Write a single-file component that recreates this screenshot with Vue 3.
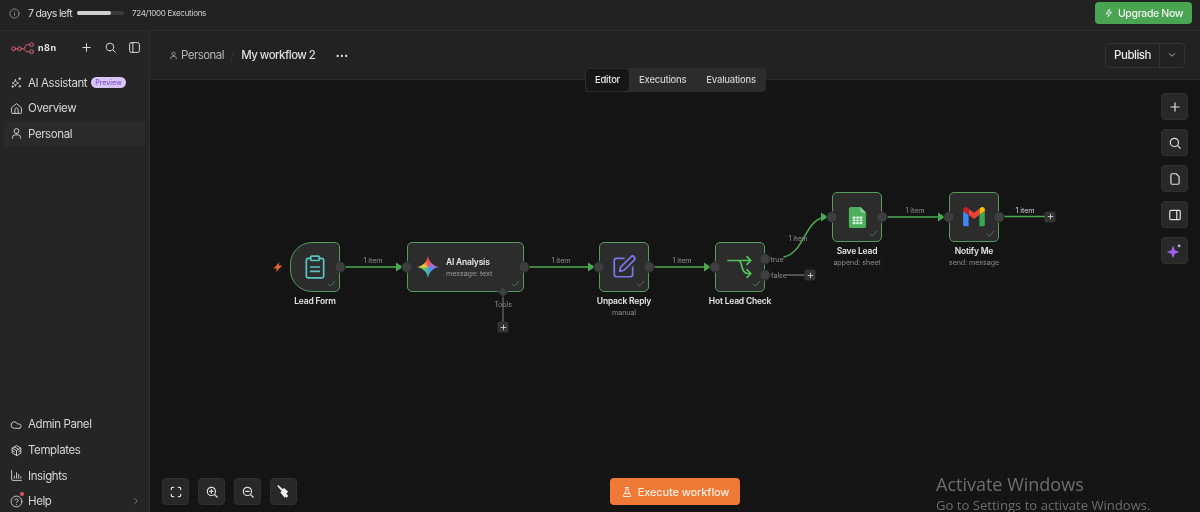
<script setup>
const nav = [
  { label: 'Overview', icon: 'M3 10.5 12 3l9 7.5V20a1 1 0 0 1-1 1H4a1 1 0 0 1-1-1zM9 21v-7a3 3 0 0 1 6 0v7' },
  { label: 'Personal', icon: 'M12 12a4.5 4.5 0 1 0 0-9 4.5 4.5 0 0 0 0 9zM4.5 21v-1.500a5 5 0 0 1 5-5h5a5 5 0 0 1 5 5V21', active: true }
]
const bottomNav = [
  { label: 'Admin Panel', icon: 'M17.500 19H8a6 6 0 1 1 5.700-7.900h1.800a4 4 0 0 1 2 7.900z' },
  { label: 'Templates', icon: 'M12 21 4 16.500v-9L12 3l8 4.500v9zM4 7.500l8 4.500 8-4.500M12 12v9M8 5.200l8 4.500M4 12l4 2.500M20 12l-4 2.500' },
  { label: 'Insights', icon: 'M3 3v16a2 2 0 0 0 2 2h16M8 17v-4M12 17V7M16 17v-7M20 17v-3' }
]
const nodes = [
  { id: 'form', name: 'Lead Form', x: 290, y: 242, w: 50, trigger: true },
  { id: 'ai', name: 'AI Analysis', sub: 'message: text', x: 407, y: 242, w: 117, inline: true },
  { id: 'edit', name: 'Unpack Reply', sub: 'manual', x: 599, y: 242, w: 50 },
  { id: 'if', name: 'Hot Lead Check', x: 715, y: 242, w: 50 },
  { id: 'sheet', name: 'Save Lead', sub: 'append: sheet', x: 832, y: 192, w: 50 },
  { id: 'gmail', name: 'Notify Me', sub: 'send: message', x: 949, y: 192, w: 50 }
]
const edgeLabels = [
  { text: '1 item', x: 373, y: 260 },
  { text: '1 item', x: 561, y: 260 },
  { text: '1 item', x: 682, y: 260 },
  { text: '1 item', x: 798, y: 238 },
  { text: '1 item', x: 915, y: 210 },
  { text: '1 item', x: 1025, y: 210, bright: true },
  { text: 'true', x: 777, y: 259 },
  { text: 'false', x: 779, y: 275 },
  { text: 'Tools', x: 503, y: 304 }
]
const handles = [
  [340, 267], [407, 267], [524, 267], [599, 267], [649, 267], [715, 267],
  [765, 259], [765, 275], [832, 217], [882, 217], [949, 217], [999, 217]
]
const arrows = [
  'M345 267H399', 'M529 267H594', 'M654 267H711', 'M887 217H944', 'M1004 216.500H1045'
]
const arrowHeads = [
  [403, 267], [595, 267], [711, 267], [828, 217], [945, 217]
]
const plusButtons = [[503, 327], [810, 275], [1050, 216.500]]
const sideTools = [
  { id: 'plus', d: 'M12 5v14M5 12h14' },
  { id: 'search', d: 'M11 18a7 7 0 1 0 0-14 7 7 0 0 0 0 14zM21 21l-4.500-4.500' },
  { id: 'note', d: 'M5 5a2 2 0 0 1 2-2h7l5 5v11a2 2 0 0 1-2 2H7a2 2 0 0 1-2-2z' },
  { id: 'panel', d: 'M5 4h14a2 2 0 0 1 2 2v12a2 2 0 0 1-2 2H5a2 2 0 0 1-2-2V6a2 2 0 0 1 2-2zM15 4v16' }
]
const zoomTools = [
  'M4 8V6a2 2 0 0 1 2-2h2M16 4h2a2 2 0 0 1 2 2v2M20 16v2a2 2 0 0 1-2 2h-2M8 20H6a2 2 0 0 1-2-2v-2',
  'M11 18a7 7 0 1 0 0-14 7 7 0 0 0 0 14zM21 21l-4.500-4.500M11 8v6M8 11h6',
  'M11 18a7 7 0 1 0 0-14 7 7 0 0 0 0 14zM21 21l-4.500-4.500M8 11h6'
]
</script>

<template>
  <div class="app">
    <header class="banner">
      <svg class="info" viewBox="0 0 24 24"><circle cx="12" cy="12" r="10" /><path d="M12 16v-4M12 8h.01" /></svg>
      <span class="days">7 days left</span>
      <span class="track"><span class="fill" /></span>
      <span class="execs">724/1000 Executions</span>
      <button class="upgrade">
        <svg viewBox="0 0 24 24"><path d="M13 3 5 14h6l-1 7 8-11h-6z" /></svg>
        Upgrade Now
      </button>
    </header>

    <div class="body">
      <aside class="sidebar">
        <div class="brand">
          <svg class="logo" viewBox="0 0 32 16">
            <circle cx="3.500" cy="9" r="2.500" />
            <circle cx="11.500" cy="9" r="2.500" />
            <circle cx="27.500" cy="3.500" r="2.500" />
            <circle cx="27.500" cy="13" r="2.500" />
            <path d="M6 9h3M14 9h3c2 0 1.500-5.500 4-5.500h4M17 9c2 0 1.500 4 4 4h4" />
          </svg>
          <span class="brand-name">n8n</span>
          <svg class="brand-icon first" viewBox="0 0 24 24"><path d="M12 5v14M5 12h14" /></svg>
          <svg class="brand-icon" viewBox="0 0 24 24"><path d="M11 18a7 7 0 1 0 0-14 7 7 0 0 0 0 14zM21 21l-4.500-4.500" /></svg>
          <svg class="brand-icon" viewBox="0 0 24 24"><rect x="3" y="3" width="18" height="18" rx="3" /><path d="M9 3v18" /></svg>
        </div>

        <a class="nav-item">
          <svg viewBox="0 0 24 24"><path d="M10 7c.8 4 2 5.200 6 6-4 .8-5.200 2-6 6-.8-4-2-5.200-6-6 4-.8 5.200-2 6-6zM18 3v4M16 5h4M5 18v3M3.500 19.500h3" /><circle cx="18" cy="19" r="1.500" /></svg>
          AI Assistant
          <span class="preview">Preview</span>
        </a>
        <a v-for="item in nav" :key="item.label" class="nav-item" :class="{ active: item.active }">
          <svg viewBox="0 0 24 24"><path :d="item.icon" /></svg>
          {{ item.label }}
        </a>

        <div class="spacer" />

        <a v-for="item in bottomNav" :key="item.label" class="nav-item">
          <svg viewBox="0 0 24 24"><path :d="item.icon" /></svg>
          {{ item.label }}
        </a>
        <a class="nav-item help">
          <span class="help-icon">
            <svg viewBox="0 0 24 24"><circle cx="12" cy="12" r="10" /><path d="M9 9a3 3 0 0 1 5.800 1c0 2-2.800 2.500-2.800 4M12 17.500h.01" /></svg>
            <i class="dot" />
          </span>
          Help
          <svg class="chev" viewBox="0 0 24 24"><path d="m9 6 6 6-6 6" /></svg>
        </a>
      </aside>

      <main class="main">
        <div class="topbar">
          <div class="crumbs">
            <svg viewBox="0 0 24 24"><path d="M12 12a4.500 4.500 0 1 0 0-9 4.500 4.500 0 0 0 0 9zM4.500 21v-1.500a5 5 0 0 1 5-5h5a5 5 0 0 1 5 5V21" /></svg>
            <span class="crumb">Personal</span>
            <span class="slash">/</span>
            <span class="title">My workflow 2</span>
            <span class="more">···</span>
          </div>
          <div class="publish">
            <span class="publish-label">Publish</span>
            <span class="publish-arrow">
              <svg viewBox="0 0 24 24"><path d="m6 9 6 6 6-6" /></svg>
            </span>
          </div>
        </div>

        <div class="tabs">
          <span class="tab on">Editor</span>
          <span class="tab">Executions</span>
          <span class="tab">Evaluations</span>
        </div>

        <section class="canvas">
          <svg class="edges" viewBox="150 80 1050 432">
            <path v-for="d in arrows" :key="d" :d="d" class="edge" />
            <path d="M784 257C806 252 804 217 828 217" class="edge" />
            <path d="M787 275H805" class="grey" />
            <path d="M503 297V322" class="grey" />
            <path v-for="a in arrowHeads" :key="a[0]" :d="`M${a[0]} ${a[1]}l-7-4.500v9z`" class="head" />
            <path d="M273.500 268.500 279.500 262l-.8 3.500h3.500L276 272l.8-3.500z" fill="#e8672f" />
          </svg>

          <span
            v-for="l in edgeLabels"
            :key="l.text + l.x"
            class="edge-label"
            :class="{ bright: l.bright }"
            :style="{ left: l.x - 150 + 'px', top: l.y - 80 + 'px' }"
          >{{ l.text }}</span>

          <span
            v-for="p in plusButtons"
            :key="p[0]"
            class="plus"
            :style="{ left: p[0] - 150 + 'px', top: p[1] - 80 + 'px' }"
          >
            <svg viewBox="0 0 24 24"><path d="M12 5v14M5 12h14" /></svg>
          </span>

          <div
            v-for="n in nodes"
            :key="n.id"
            class="node"
            :style="{ left: n.x - 150 + 'px', top: n.y - 80 + 'px', width: n.w + 'px' }"
          >
            <div class="box" :class="{ trigger: n.trigger, wide: n.inline }">
              <svg v-if="n.id === 'form'" class="node-icon" viewBox="0 0 24 24" style="stroke:#5cc2bd">
                <rect x="8" y="2" width="8" height="4" rx="1" />
                <path d="M16 4h2a2 2 0 0 1 2 2v14a2 2 0 0 1-2 2H6a2 2 0 0 1-2-2V6a2 2 0 0 1 2-2h2M8 12h8M8 16h8" />
              </svg>
              <span v-if="n.id === 'ai'" class="gem" />
              <svg v-if="n.id === 'edit'" class="node-icon" viewBox="0 0 24 24" style="stroke:#7b78e8">
                <path d="M12 4H5a2 2 0 0 0-2 2v13a2 2 0 0 0 2 2h13a2 2 0 0 0 2-2v-7" />
                <path d="M18.400 2.600a2.100 2.100 0 0 1 3 3L12 15l-4 1 1-4z" />
              </svg>
              <svg v-if="n.id === 'if'" class="node-icon" viewBox="0 0 24 24" style="stroke:#4fc45a">
                <path d="M1 6h9c3 0 3 3 4 6.500s2 5.500 5 5.500h3M12 6h10M18.500 2.500 22 6l-3.500 3.500M18.500 14.500 22 18l-3.500 3.500" />
              </svg>
              <svg v-if="n.id === 'sheet'" class="brand-node" viewBox="0 0 24 24">
                <path d="M5 1h10l6 6v14a2 2 0 0 1-2 2H5a2 2 0 0 1-2-2V3a2 2 0 0 1 2-2z" fill="#4caf5c" />
                <path d="M15 1l6 6h-4a2 2 0 0 1-2-2z" fill="#8fd19a" />
                <path d="M7 11h10v8H7z" fill="#e8f5e9" />
                <path d="M7 13.700h10M7 16.300h10M10.300 11v8M13.700 11v8" stroke="#4caf5c" stroke-width=".9" />
              </svg>
              <svg v-if="n.id === 'gmail'" class="gmail" viewBox="0 0 24 24">
                <path d="M2 6.500V19a1.500 1.500 0 0 0 1.500 1.500H7V10z" fill="#4285f4" />
                <path d="M17 20.500h3.500A1.500 1.500 0 0 0 22 19V6.500L17 10z" fill="#34a853" />
                <path d="M17 10V4.300l1.600-1.200c1.300-1 3.400 0 3.400 1.700v1.700z" fill="#fbbc04" />
                <path d="M7 10V4.300l5 3.800 5-3.800V10l-5 3.800z" fill="#ea4335" />
                <path d="M2 6.500V4.800c0-1.700 2.100-2.700 3.400-1.700L7 4.300V10z" fill="#c5221f" />
              </svg>
              <div v-if="n.inline" class="inline-text">
                <strong>{{ n.name }}</strong>
                <small>{{ n.sub }}</small>
              </div>
              <svg class="check" viewBox="0 0 24 24"><path d="M3 13l6 6L21 6" /></svg>
            </div>
            <div v-if="!n.inline" class="caption">
              <strong>{{ n.name }}</strong>
              <small v-if="n.sub">{{ n.sub }}</small>
            </div>
          </div>

          <!-- handles sit on the node borders, so they come after the nodes -->
          <svg class="edges" viewBox="150 80 1050 432">
            <circle v-for="h in handles" :key="h[0] + '-' + h[1]" :cx="h[0]" :cy="h[1]" r="5.200" class="handle" />
            <path d="M503 287 508 292 503 297 498 292z" class="handle" />
          </svg>

          <div class="side-tools">
            <span v-for="t in sideTools" :key="t.id" class="tool">
              <svg viewBox="0 0 24 24"><path :d="t.d" /></svg>
            </span>
            <span class="tool">
              <svg class="spark" viewBox="0 0 24 24">
                <path d="M10 5l2.500 6.500L19 14l-6.500 2.500L10 23l-2.500-6.500L1 14l6.500-2.500z" />
                <circle cx="18.500" cy="5.500" r="2" fill="#c9a8f5" />
              </svg>
            </span>
          </div>

          <div class="footer-tools">
            <div class="zoom-tools">
              <span v-for="d in zoomTools" :key="d" class="tool">
                <svg viewBox="0 0 24 24"><path :d="d" /></svg>
              </span>
              <span class="tool">
                <svg class="broom" viewBox="0 0 24 24">
                  <path d="M2 3l1.500-1.500 7 6.500 2.500-1.500 6.500 6-3 2.500 3 4-2.500 3-2-1.500-1 1.500-7-8.500 2-2.500z" />
                </svg>
              </span>
            </div>
            <button class="execute">
              <svg viewBox="0 0 24 24"><path d="M9 3h6M10 3v6.500L4.500 19a1.500 1.500 0 0 0 1.300 2h12.400a1.500 1.500 0 0 0 1.300-2L14 9.500V3M7.500 15h9" /></svg>
              Execute workflow
            </button>
          </div>

          <div class="watermark">
            <div class="wm-title">Activate Windows</div>
            <div class="wm-sub">Go to Settings to activate Windows.</div>
          </div>
        </section>
      </main>
    </div>
  </div>
</template>

<style>
html,
body {
  margin: 0;
  background: #141414;
  overflow: hidden;
}
</style>

<style scoped>
.app {
  width: 1200px;
  height: 512px;
  display: flex;
  flex-direction: column;
  overflow: hidden;
  font-family: Inter, "Liberation Sans", sans-serif;
  color: #e4e4e4;
  background: #141414;
  /* the reference is a soft, recompressed screenshot */
  filter: blur(.3px);
}

svg {
  fill: none;
  stroke: currentColor;
  stroke-width: 2;
  stroke-linecap: round;
  stroke-linejoin: round;
  flex: none;
}

/* top banner */
.banner {
  height: 31px;
  flex: none;
  box-sizing: border-box;
  display: flex;
  align-items: center;
  padding: 0 8px 4px 9px;
  background: #222222;
  border-bottom: 1px solid #2c2c2c;
}

.info {
  width: 11px;
  height: 11px;
  color: #8f8f8f;
}

.days {
  margin-left: 8px;
  font-size: 10.500px;
  letter-spacing: -.65px;
  color: #dcdcdc;
}

.track {
  margin-left: 5px;
  width: 47px;
  height: 4px;
  border-radius: 2px;
  background: #3a3a3a;
}

.fill {
  display: block;
  width: 34px;
  height: 4px;
  border-radius: 2px;
  background: #d0d0d0;
}

.execs {
  margin-left: 8px;
  font-size: 8px;
  letter-spacing: -.27px;
  color: #cfcfcf;
}

.upgrade {
  margin-left: auto;
  width: 97px;
  height: 22px;
  display: flex;
  align-items: center;
  justify-content: center;
  gap: 4px;
  border: none;
  border-radius: 4px;
  background: #4aa552;
  color: #f2f2f2;
  font: 500 10.500px Inter, "Liberation Sans", sans-serif;
  letter-spacing: -.35px;
}

.upgrade svg {
  width: 10px;
  height: 10px;
}

.body {
  flex: 1;
  display: flex;
  min-height: 0;
}

/* sidebar */
.sidebar {
  width: 150px;
  flex: none;
  box-sizing: border-box;
  padding: 0 4px;
  display: flex;
  flex-direction: column;
  background: #252525;
  border-right: 1px solid #303030;
}

.brand {
  height: 33px;
  display: flex;
  align-items: center;
  padding: 0 4px 0 7px;
  margin-bottom: 6px;
}

.logo {
  width: 24px;
  height: 14px;
  color: #e0607a;
  stroke-width: 1.300;
}

.brand-name {
  margin-left: 3px;
  font-size: 9px;
  font-weight: 700;
  letter-spacing: .5px;
  color: #e4e4e4;
}

.brand-icon {
  width: 13px;
  height: 13px;
  margin-left: 11px;
  color: #dcdcdc;
  stroke-width: 1.800;
}

.brand-icon.first {
  margin-left: auto;
}

.nav-item {
  height: 25.600px;
  flex: none;
  display: flex;
  align-items: center;
  gap: 5px;
  padding-left: 6px;
  border-radius: 4px;
  font-size: 11.500px;
  letter-spacing: -.4px;
  color: #d6d6d6;
}

.nav-item svg {
  width: 13px;
  height: 13px;
  stroke-width: 1.700;
}

.nav-item.active {
  background: #2a2a2a;
}

.preview {
  margin-left: -1px;
  padding: 0 4px;
  height: 11px;
  line-height: 11px;
  border-radius: 6px;
  background: #d9c6f9;
  color: #8352d8;
  font-size: 7px;
  font-weight: 500;
  letter-spacing: 0;
}

.spacer {
  flex: 1;
}

.help {
  margin-bottom: -2px;
}

.help-icon {
  position: relative;
  display: flex;
}

.dot {
  position: absolute;
  top: -3px;
  right: -1px;
  width: 4px;
  height: 4px;
  border-radius: 50%;
  background: #e5545f;
}

.nav-item .chev {
  margin-left: auto;
  margin-right: 4px;
  width: 10px;
  height: 10px;
  color: #9a9a9a;
}

/* header of the editor */
.main {
  position: relative;
  flex: 1;
  display: flex;
  flex-direction: column;
  min-width: 0;
}

.topbar {
  height: 49px;
  flex: none;
  box-sizing: border-box;
  display: flex;
  align-items: center;
  justify-content: space-between;
  padding: 0 15px 0 19px;
  background: #222222;
  border-bottom: 1px solid #2b2b2b;
}

.crumbs {
  display: flex;
  align-items: center;
}

.crumbs svg {
  width: 9px;
  height: 9px;
  color: #b0b0b0;
}

.crumb {
  margin-left: 3px;
  font-size: 11.500px;
  letter-spacing: -.55px;
  color: #b5b5b5;
}

.slash {
  margin: 0 7px 0 6px;
  font-size: 12px;
  color: #383838;
}

.title {
  font-size: 11.500px;
  letter-spacing: -.55px;
  font-weight: 500;
  color: #dedede;
}

.more {
  margin-left: 20px;
  font-size: 13px;
  font-weight: 700;
  color: #dcdcdc;
}

.publish {
  width: 80px;
  height: 25px;
  display: flex;
  box-sizing: border-box;
  border: 1px solid #333333;
  border-radius: 4px;
}

.publish-label {
  flex: 1;
  display: flex;
  align-items: center;
  justify-content: center;
  font-size: 11.500px;
  letter-spacing: -.5px;
  font-weight: 500;
  color: #e8e8e8;
}

.publish-arrow {
  width: 24px;
  display: flex;
  align-items: center;
  justify-content: center;
  border-left: 1px solid #333333;
}

.publish-arrow svg {
  width: 10px;
  height: 10px;
  color: #c8c8c8;
}

.tabs {
  position: absolute;
  z-index: 3;
  left: 435px;
  top: 37px;
  width: 181px;
  height: 24px;
  box-sizing: border-box;
  display: flex;
  align-items: center;
  padding: 1px;
  border-radius: 4px;
  background: #2c2c2c;
}

.tab {
  height: 22px;
  line-height: 22px;
  padding: 0 10px;
  font-size: 9.500px;
  letter-spacing: -.25px;
  font-weight: 500;
  color: #cdcdcd;
}

.tab.on {
  padding: 0 9px;
  background: #161616;
  border-radius: 4px;
  color: #e6e6e6;
}

/* canvas */
.canvas {
  flex: 1;
  position: relative;
  overflow: hidden;
  background-color: #141414;
  background-image: radial-gradient(#191919 1px, transparent 1px);
  background-size: 8px 8px;
}

.edges {
  position: absolute;
  left: 0;
  top: 0;
  width: 1050px;
  height: 432px;
  stroke: none;
  pointer-events: none;
}

.edge {
  stroke: #4aaa52;
  stroke-width: 1.500;
  fill: none;
}

.grey {
  stroke: #666666;
  stroke-width: 1.300;
  fill: none;
}

.head {
  fill: #4aaa52;
  stroke: none;
}

.handle {
  fill: #3e3e3e;
  stroke: #2a2a2a;
  stroke-width: 1;
}

.edge-label {
  position: absolute;
  transform: translate(-50%, -50%);
  font-size: 7.200px;
  letter-spacing: -.1px;
  color: #8c8c8c;
  white-space: nowrap;
}

.edge-label.bright {
  color: #d0d0d0;
}

.plus {
  position: absolute;
  transform: translate(-50%, -50%);
  width: 11px;
  height: 11px;
  display: flex;
  align-items: center;
  justify-content: center;
  border-radius: 2px;
  background: #333333;
  color: #d8d8d8;
}

.plus svg {
  width: 8px;
  height: 8px;
  stroke-width: 2.500;
}

.node {
  position: absolute;
  display: flex;
  flex-direction: column;
  align-items: center;
}

.box {
  position: relative;
  width: 100%;
  height: 50px;
  box-sizing: border-box;
  display: flex;
  align-items: center;
  justify-content: center;
  border: 1.500px solid #579a5c;
  border-radius: 5px;
  background: #2c2c2c;
}

.box.trigger {
  border-radius: 22px 5px 5px 22px;
}

.box.wide {
  justify-content: flex-start;
  padding-left: 9px;
  gap: 7px;
}

.node-icon {
  width: 26px;
  height: 26px;
  stroke-width: 1.600;
}

.gem {
  width: 22px;
  height: 22px;
  flex: none;
  background: conic-gradient(#e8504a, #b56cd0 18%, #4b8df0 35%, #3fb8b0 55%, #5cc46a 65%, #f6c73b 80%, #e8504a);
  clip-path: path('M11 0C12 5.500 16 10 22 11C16 12 12 16.500 11 22C10 16.500 6 12 0 11C6 10 10 5.500 11 0Z');
}

.brand-node {
  width: 23px;
  height: 23px;
  stroke: none;
}

.gmail {
  width: 26px;
  height: 26px;
  stroke: none;
}

.inline-text {
  display: flex;
  flex-direction: column;
  gap: 2px;
  white-space: nowrap;
}

.inline-text strong {
  font-size: 8.500px;
  letter-spacing: -.2px;
  font-weight: 600;
  color: #e6e6e6;
}

.inline-text small {
  font-size: 7.200px;
  letter-spacing: -.1px;
  color: #9a9a9a;
}

.check {
  position: absolute;
  right: 3px;
  bottom: 3px;
  width: 9px;
  height: 9px;
  color: #4f9a55;
  stroke-width: 2;
}

.caption {
  margin-top: 4px;
  display: flex;
  flex-direction: column;
  align-items: center;
  white-space: nowrap;
  gap: 1px;
}

.caption strong {
  font-size: 8.500px;
  letter-spacing: -.2px;
  font-weight: 600;
  line-height: 11px;
  color: #e6e6e6;
}

.caption small {
  font-size: 7.200px;
  letter-spacing: -.1px;
  line-height: 9px;
  color: #8c8c8c;
}

/* floating tools */
.tool {
  width: 27px;
  height: 27px;
  box-sizing: border-box;
  display: flex;
  align-items: center;
  justify-content: center;
  border: 1px solid #303030;
  border-radius: 4px;
  background: #282828;
  color: #e0e0e0;
}

.tool svg {
  width: 14px;
  height: 14px;
  stroke-width: 2;
}

.side-tools {
  position: absolute;
  right: 12px;
  top: 13px;
  display: flex;
  flex-direction: column;
  gap: 9px;
}

.tool .spark {
  width: 17px;
  height: 17px;
  fill: #9a63ec;
  stroke: none;
}

.footer-tools {
  position: absolute;
  left: 12px;
  right: 0;
  bottom: 7px;
  display: flex;
  align-items: center;
}

.zoom-tools {
  display: flex;
  gap: 9px;
}

.tool .broom {
  width: 15px;
  height: 15px;
  fill: #f0f0f0;
  stroke: none;
}

.execute {
  position: absolute;
  left: 448px;
  top: 0;
  width: 130px;
  height: 27px;
  display: flex;
  align-items: center;
  justify-content: center;
  gap: 5px;
  border: none;
  border-radius: 4px;
  background: #ee7a35;
  color: #fbeee5;
  font: 500 11px Inter, "Liberation Sans", sans-serif;
  letter-spacing: -.12px;
}

.execute svg {
  width: 12px;
  height: 12px;
}

.watermark {
  position: absolute;
  left: 786px;
  top: 392px;
  font-family: "Open Sans", "Noto Sans", sans-serif;
  color: #6e6e6e;
  white-space: nowrap;
}

.wm-title {
  font-size: 18px;
  line-height: 24px;
}

.wm-sub {
  font-size: 13.100px;
  line-height: 19px;
}
</style>
